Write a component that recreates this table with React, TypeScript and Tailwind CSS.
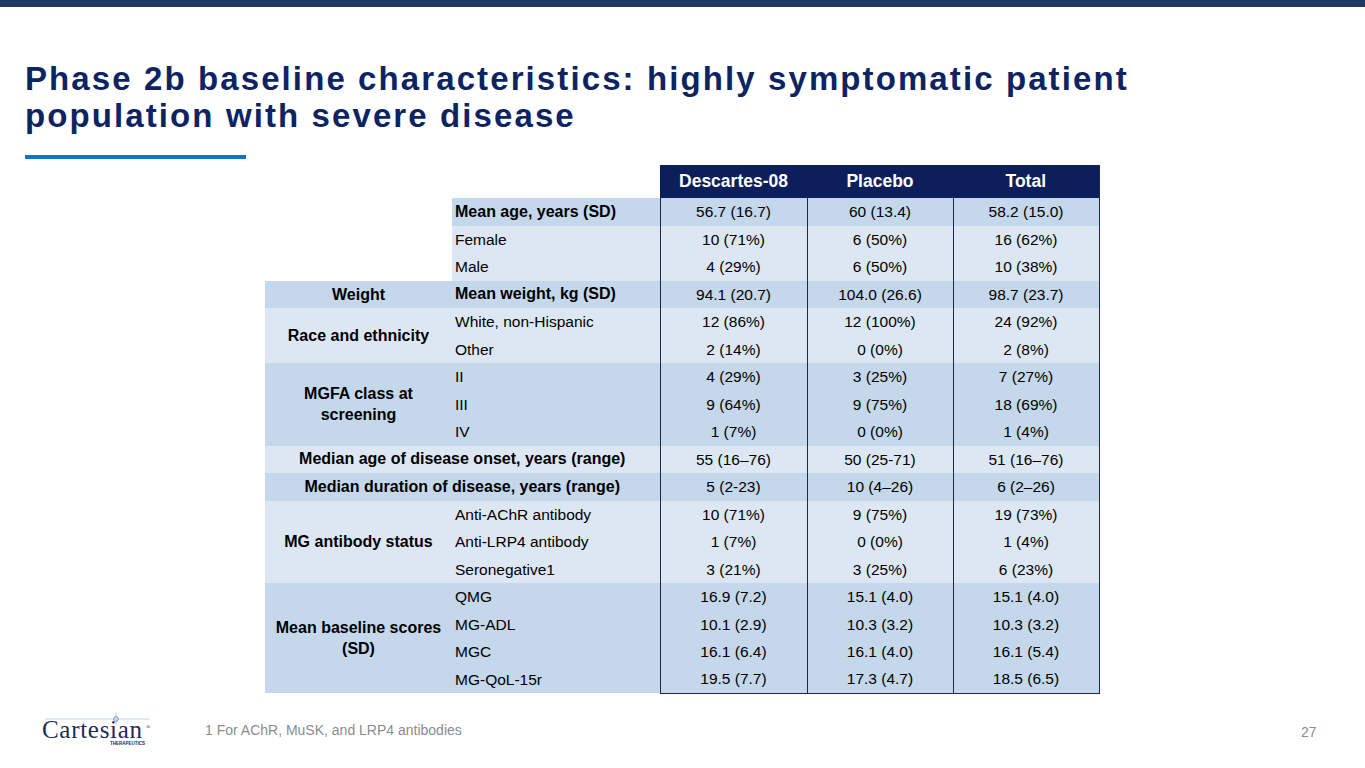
import React from "react";

type Row = {
  group?: { label: string; span: number; colSpan2?: boolean };
  sub?: string;
  subBold?: boolean;
  values: [string, string, string];
  dark: boolean;
};

const rows: Row[] = [
  { sub: "Mean age, years (SD)", subBold: true, values: ["56.7 (16.7)", "60 (13.4)", "58.2 (15.0)"], dark: true },
  { sub: "Female", values: ["10 (71%)", "6 (50%)", "16 (62%)"], dark: false },
  { sub: "Male", values: ["4 (29%)", "6 (50%)", "10 (38%)"], dark: false },
  { group: { label: "Weight", span: 1 }, sub: "Mean weight, kg (SD)", subBold: true, values: ["94.1 (20.7)", "104.0 (26.6)", "98.7 (23.7)"], dark: true },
  { group: { label: "Race and ethnicity", span: 2 }, sub: "White, non-Hispanic", values: ["12 (86%)", "12 (100%)", "24 (92%)"], dark: false },
  { sub: "Other", values: ["2 (14%)", "0 (0%)", "2 (8%)"], dark: false },
  { group: { label: "MGFA class at screening", span: 3 }, sub: "II", values: ["4 (29%)", "3 (25%)", "7 (27%)"], dark: true },
  { sub: "III", values: ["9 (64%)", "9 (75%)", "18 (69%)"], dark: true },
  { sub: "IV", values: ["1 (7%)", "0 (0%)", "1 (4%)"], dark: true },
  { group: { label: "Median age of disease onset, years (range)", span: 1, colSpan2: true }, values: ["55 (16–76)", "50 (25-71)", "51 (16–76)"], dark: false },
  { group: { label: "Median duration of disease, years (range)", span: 1, colSpan2: true }, values: ["5 (2-23)", "10 (4–26)", "6 (2–26)"], dark: true },
  { group: { label: "MG antibody status", span: 3 }, sub: "Anti-AChR antibody", values: ["10 (71%)", "9 (75%)", "19 (73%)"], dark: false },
  { sub: "Anti-LRP4 antibody", values: ["1 (7%)", "0 (0%)", "1 (4%)"], dark: false },
  { sub: "Seronegative1", values: ["3 (21%)", "3 (25%)", "6 (23%)"], dark: false },
  { group: { label: "Mean baseline scores (SD)", span: 4 }, sub: "QMG", values: ["16.9 (7.2)", "15.1 (4.0)", "15.1 (4.0)"], dark: true },
  { sub: "MG-ADL", values: ["10.1 (2.9)", "10.3 (3.2)", "10.3 (3.2)"], dark: true },
  { sub: "MGC", values: ["16.1 (6.4)", "16.1 (4.0)", "16.1 (5.4)"], dark: true },
  { sub: "MG-QoL-15r", values: ["19.5 (7.7)", "17.3 (4.7)", "18.5 (6.5)"], dark: true },
];

const Logo = () => (
  <div className="relative w-[112px] h-[36px]">
    <svg className="absolute left-0 top-0" width="112" height="16" viewBox="0 0 112 16">
      <line x1="3" y1="7" x2="108" y2="7" stroke="#9fb5d6" strokeWidth="0.6" />
      <line x1="74" y1="0" x2="74" y2="14" stroke="#9fb5d6" strokeWidth="0.6" />
      <circle cx="74" cy="7" r="2.3" fill="none" stroke="#5f86c0" strokeWidth="0.9" />
    </svg>
    <div className="absolute left-0 top-[5px] font-['Liberation_Serif',serif] text-[25px] leading-none text-[#1c2a5e] tracking-[0.7px]">
      Cartesian
    </div>
    <div className="absolute left-[104px] top-[12px] font-['Liberation_Serif',serif] text-[6px] leading-none text-[#1c2a5e]">
      ®
    </div>
    <div className="absolute left-[68px] top-[30px] font-['Liberation_Sans',sans-serif] text-[4.5px] font-bold leading-none text-[#1c2a5e]">
      THERAPEUTICS
    </div>
  </div>
);

export default function App() {
  const dataBorder = "border-l border-[#1b2a45]";
  return (
    <div className="w-[1365px] h-[768px] bg-white relative overflow-hidden font-['Liberation_Sans',Arial,sans-serif]">
      <div className="h-[7px] bg-[#1f3864]" />
      <div className="pl-[25px] pt-[53px]">
        <h1 className="text-[33px] leading-[37px] font-bold text-[#0e2462] tracking-[2.1px] whitespace-nowrap">
          Phase 2b baseline characteristics: highly symptomatic patient
          <br />
          population with severe disease
        </h1>
        <div className="mt-[21px] w-[221px] h-[4px] bg-[#1475be]" />
      </div>

      <div className="pl-[265px] pt-[6px]">
        <table className="border-collapse table-fixed w-[834px] text-[15.5px] text-black">
          <colgroup>
            <col className="w-[187px]" />
            <col className="w-[208px]" />
            <col className="w-[147px]" />
            <col className="w-[146px]" />
            <col className="w-[146px]" />
          </colgroup>
          <thead>
            <tr className="h-[33px]">
              <th colSpan={2} />
              <th className="bg-[#0c1f5a] text-white text-[17.5px] font-bold">Descartes-08</th>
              <th className="bg-[#0c1f5a] text-white text-[17.5px] font-bold">Placebo</th>
              <th className="bg-[#0c1f5a] text-white text-[17.5px] font-bold border-r border-[#1b2a45]">Total</th>
            </tr>
          </thead>
          <tbody>
            {rows.map((r, i) => {
              const bg = r.dark ? "bg-[#c4d7eb]" : "bg-[#dde7f3]";
              const last = i === rows.length - 1;
              return (
                <tr key={i} className="h-[27.5px]">
                  {i === 0 && <td rowSpan={3} className="bg-white" />}
                  {r.group &&
                    (r.group.colSpan2 ? (
                      <td colSpan={2} className={`${bg} text-center font-bold text-[16px]`}>
                        {r.group.label}
                      </td>
                    ) : (
                      <td
                        rowSpan={r.group.span}
                        className={`${bg} text-center font-bold text-[16px] leading-[21px] px-1`}
                      >
                        {r.group.label}
                      </td>
                    ))}
                  {r.sub !== undefined && (
                    <td className={`${bg} pl-[3px] ${r.subBold ? "font-bold text-[16px]" : ""}`}>{r.sub}</td>
                  )}
                  {r.values.map((v, j) => (
                    <td
                      key={j}
                      className={`${bg} ${dataBorder} text-center ${j === 2 ? "border-r border-r-[#1b2a45]" : ""} ${
                        last ? "border-b border-b-[#1b2a45]" : ""
                      }`}
                    >
                      {v}
                    </td>
                  ))}
                </tr>
              );
            })}
          </tbody>
        </table>
      </div>

      <div className="absolute left-[42px] top-[712px]">
        <Logo />
      </div>
      <div className="absolute left-[205px] top-[720px] text-[14px] text-[#8c8c8c]">
        1 For AChR, MuSK, and LRP4 antibodies
      </div>
      <div className="absolute left-[1301px] top-[722px] text-[14px] text-[#8c8c8c]">27</div>
    </div>
  );
}
